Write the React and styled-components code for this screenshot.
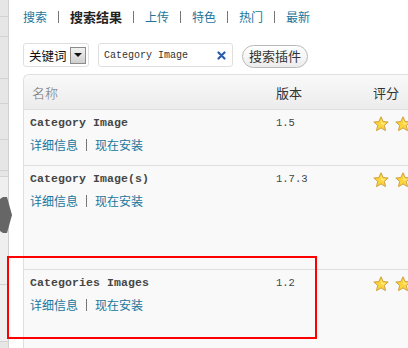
import React from 'react';
import styled, { createGlobalStyle } from 'styled-components';

const Global = createGlobalStyle`
  html, body { margin: 0; padding: 0; background: #fff; overflow: hidden; }
  body { font-family: "Noto Sans CJK SC", "Noto Sans", sans-serif; }
`;

const Page = styled.div`
  position: relative;
  width: 408px;
  height: 348px;
  overflow: hidden;
  display: flex;
  background: #fff;
`;

const Sidebar = styled.div`
  width: 8px;
  flex: none;
  background: #e6e6e6;
  border-right: 1px solid #d2d2d2;
  display: flex;
  flex-direction: column;
`;

const SideItem = styled.div`
  height: ${p => p.h}px;
  flex: none;
  border-bottom: 1px solid #d3d3d3;
  background: ${p => (p.light ? '#efefef' : 'transparent')};
`;

const SideArrow = styled.svg`
  position: absolute;
  left: 0;
  top: 197px;
`;

const Main = styled.div`
  flex: 1;
  min-width: 0;
  padding: 9px 0 0 14px;
  display: flex;
  flex-direction: column;
`;

const Nav = styled.nav`
  display: flex;
  align-items: center;
  height: 16px;
  font-size: 12px;
  line-height: 16px;
  white-space: nowrap;
`;

const NavLink = styled.a`
  color: ${p => (p.current ? '#222' : '#21759b')};
  font-weight: ${p => (p.current ? 700 : 400)};
  font-size: ${p => (p.current ? '13px' : '12px')};
  text-decoration: none;
`;

const Sep = styled.span`
  display: inline-block;
  width: 1px;
  height: ${p => p.h || 12}px;
  background: #777;
  margin: 0 ${p => p.m || 11}px;
`;

const SearchRow = styled.div`
  margin-top: 18px;
  display: flex;
  align-items: center;
  gap: 9px;
  height: 24px;
`;

const Select = styled.div`
  box-sizing: border-box;
  width: 66px;
  height: 24px;
  border: 1px solid #dfdfdf;
  border-radius: 3px;
  background: #fff;
  display: flex;
  align-items: center;
  justify-content: space-between;
  padding: 0 2px 0 5px;
  font-size: 12.5px;
  color: #111;
`;

const DropBtn = styled.span`
  box-sizing: border-box;
  width: 16px;
  height: 17px;
  border: 1px solid #8c8c8c;
  background: linear-gradient(#f2f2f2, #cfcfcf);
  display: flex;
  align-items: center;
  justify-content: center;
`;

const Triangle = styled.span`
  width: 0;
  height: 0;
  border-left: 4px solid transparent;
  border-right: 4px solid transparent;
  border-top: 4px solid #111;
`;

const Input = styled.div`
  box-sizing: border-box;
  width: 135px;
  height: 24px;
  border: 1px solid #dfdfdf;
  border-radius: 3px;
  background: #fff;
  display: flex;
  align-items: center;
  justify-content: space-between;
  padding: 0 6px 0 5px;
  font-family: "Liberation Mono", monospace;
  font-size: 10px;
  color: #333;
`;

const ClearIcon = styled.svg`
  flex: none;
`;

const Button = styled.button`
  box-sizing: border-box;
  width: 66px;
  height: 23px;
  margin-top: 2px;
  border: 1px solid #b9b9b9;
  border-radius: 12px;
  background: linear-gradient(#ffffff, #ececec);
  font-family: "Noto Sans CJK SC", sans-serif;
  font-size: 13px;
  color: #333;
  padding: 0;
  line-height: 20px;
`;

const Table = styled.div`
  margin-top: 7px;
  width: 460px;
  border: 1px solid #dfdfdf;
  border-right: none;
  border-bottom: none;
  border-top-left-radius: 6px;
  background: #f9f9f9;
  flex: 1;
`;

const Grid = styled.div`
  display: grid;
  grid-template-columns: 244px 98px 1fr;
`;

const Head = styled(Grid)`
  height: 34px;
  align-items: center;
  background: linear-gradient(#f9f9f9, #ececec);
  border-bottom: 1px solid #dfdfdf;
  border-top-left-radius: 6px;
  font-size: 13px;
`;

const HeadCell = styled.div`
  padding-left: ${p => p.pl}px;
  color: ${p => (p.muted ? '#707070' : '#333')};
  font-weight: ${p => (p.muted ? 300 : 400)};
`;

const Row = styled(Grid)`
  min-height: ${p => p.h}px;
  box-sizing: border-box;
  border-top: ${p => (p.first ? 'none' : '1px solid #dfdfdf')};
`;

const NameCell = styled.div`
  padding: 5px 0 0 6px;
  display: flex;
  flex-direction: column;
  gap: 6px;
`;

const PluginName = styled.div`
  font-family: "Liberation Mono", monospace;
  font-weight: 700;
  font-size: 11.5px;
  letter-spacing: 0.1px;
  line-height: 16px;
  color: #464646;
`;

const Actions = styled.div`
  display: flex;
  align-items: center;
  font-size: 12px;
  line-height: 16px;
`;

const ActionLink = styled.a`
  color: #21759b;
  text-decoration: none;
`;

const Version = styled.div`
  padding: 5px 0 0 8px;
  font-family: "Liberation Mono", monospace;
  font-size: 10.5px;
  line-height: 16px;
  color: #444;
`;

const Stars = styled.div`
  padding: 6px 0 0 7px;
  display: flex;
  gap: 6px;
`;

const Highlight = styled.div`
  position: absolute;
  left: 7px;
  top: 256px;
  width: 310px;
  height: 83px;
  box-sizing: border-box;
  border: 2px solid #f00;
  pointer-events: none;
`;

const Star = () => (
  <svg width="16" height="16" viewBox="0 0 16 16">
    <polygon
      points="8,0.8 10.1,5.6 15.2,6 11.3,9.4 12.5,14.6 8,11.9 3.5,14.6 4.7,9.4 0.8,6 5.9,5.6"
      fill="#fcd43c"
      stroke="#cf9f3e"
      strokeWidth="1"
      strokeLinejoin="round"
    />
    <polygon points="8,3 9.4,6.6 13,7 10.2,9.4 8,8" fill="#fff1a8" opacity="0.6" />
  </svg>
);

const plugins = [
  { name: 'Category Image', version: '1.5', h: 55 },
  { name: 'Category Image(s)', version: '1.7.3', h: 104 },
  { name: 'Categories Images', version: '1.2', h: 90 },
];

const navItems = ['搜索', '搜索结果', '上传', '特色', '热门', '最新'];

export default function App() {
  return (
    <Page>
      <Global />
      <Sidebar>
        <SideItem h={16} />
        <SideItem h={19} />
        <SideItem h={41} />
        <SideItem h={24} />
        <SideItem h={35} />
        <SideItem h={30} />
        <SideItem h={5} />
        <SideItem h={107} light />
        <SideItem h={56} light />
      </Sidebar>
      <SideArrow width="12" height="36" viewBox="0 0 12 36">
        <polygon points="0,2 3,0 7,0 12,18 7,36 3,36 0,34" fill="#666" />
      </SideArrow>
      <Main>
        <Nav>
          {navItems.map((item, i) => (
            <React.Fragment key={item}>
              {i > 0 && <Sep />}
              <NavLink href="#" current={i === 1}>{item}</NavLink>
            </React.Fragment>
          ))}
        </Nav>
        <SearchRow>
          <Select>
            关键词
            <DropBtn><Triangle /></DropBtn>
          </Select>
          <Input>
            Category Image
            <ClearIcon width="9" height="9" viewBox="0 0 9 9">
              <path d="M1.5 1.5 L7.5 7.5 M7.5 1.5 L1.5 7.5" stroke="#2a5caa" strokeWidth="2.2" strokeLinecap="round" />
            </ClearIcon>
          </Input>
          <Button>搜索插件</Button>
        </SearchRow>
        <Table>
          <Head>
            <HeadCell pl={8} muted>名称</HeadCell>
            <HeadCell pl={8}>版本</HeadCell>
            <HeadCell pl={7}>评分</HeadCell>
          </Head>
          {plugins.map((p, i) => (
            <Row key={p.name} h={p.h} first={i === 0}>
              <NameCell>
                <PluginName>{p.name}</PluginName>
                <Actions>
                  <ActionLink href="#">详细信息</ActionLink>
                  <Sep h={12} m={8} />
                  <ActionLink href="#">现在安装</ActionLink>
                </Actions>
              </NameCell>
              <Version>{p.version}</Version>
              <Stars>
                <Star />
                <Star />
              </Stars>
            </Row>
          ))}
        </Table>
      </Main>
      <Highlight />
    </Page>
  );
}
